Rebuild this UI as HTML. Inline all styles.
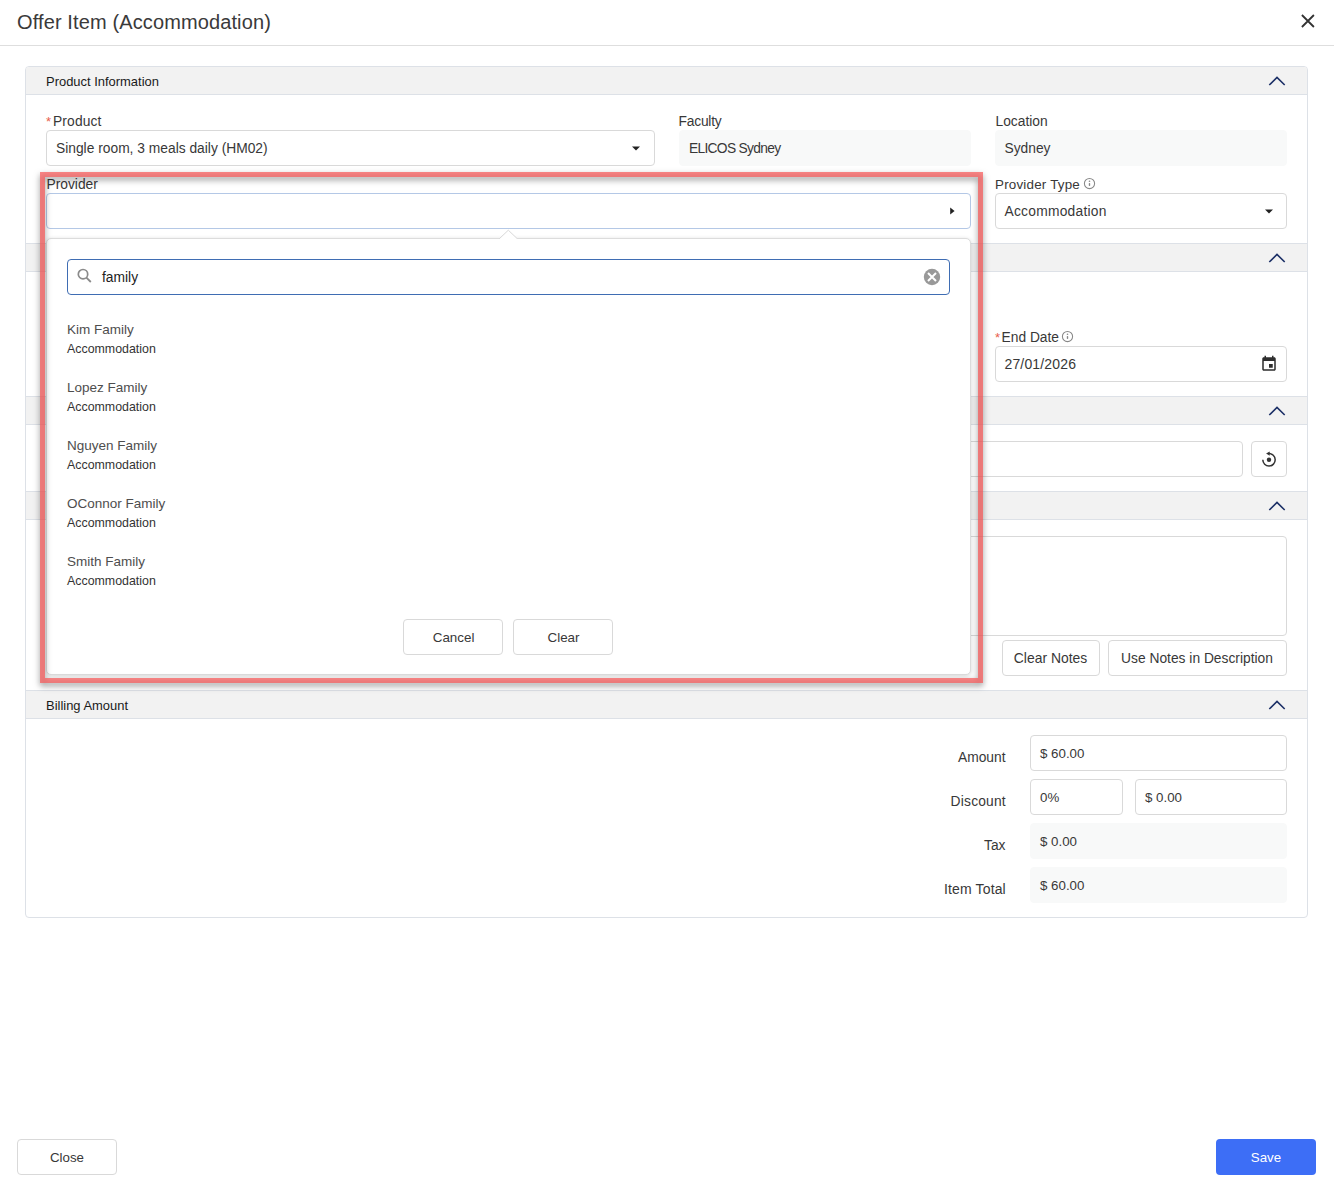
<!DOCTYPE html>
<html><head><meta charset="utf-8"><style>
html,body{margin:0;padding:0;background:#fff;width:1334px;height:1190px;overflow:hidden;position:relative;font-family:"Liberation Sans", sans-serif;}
.a{position:absolute;}
.t{position:absolute;white-space:nowrap;font-family:"Liberation Sans", sans-serif;}
</style></head><body>
<div class="t" style="left:17px;top:11px;font-size:20px;line-height:22px;color:#3a3a3a;letter-spacing:0.12px">Offer Item (Accommodation)</div>
<svg class="a" style="left:1300px;top:13px" width="16" height="16" viewBox="0 0 16 16"><path d="M1.9 2.0 L13.9 14.0 M13.9 2.0 L1.9 14.0" stroke="#333" stroke-width="1.8" fill="none"/></svg>
<div class="a" style="left:0px;top:45px;width:1334px;height:1px;background:#dedede"></div>
<div class="a" style="left:25px;top:66px;width:1283px;height:852px;border:1px solid #dde1e7;border-radius:4px;box-sizing:border-box;background:#fff"></div>
<div class="a" style="left:26px;top:67px;width:1281px;height:28px;background:#f2f2f2;border-bottom:1px solid #dde1e7;box-sizing:border-box;border-radius:3px 3px 0 0"></div>
<svg class="a" style="left:1268px;top:75px" width="18" height="12" viewBox="0 0 18 12"><path d="M1.3 10 L9 2.4 L16.7 10" stroke="#1b2f66" stroke-width="1.6" fill="none"/></svg>
<div class="t" style="left:46px;top:74px;font-size:12.95px;line-height:15px;color:#1a1a1a;">Product Information</div>
<div class="a" style="left:26px;top:243px;width:1281px;height:29px;background:#f2f2f2;border-top:1px solid #dde1e7;border-bottom:1px solid #dde1e7;box-sizing:border-box;"></div>
<svg class="a" style="left:1268px;top:251.5px" width="18" height="12" viewBox="0 0 18 12"><path d="M1.3 10 L9 2.4 L16.7 10" stroke="#1b2f66" stroke-width="1.6" fill="none"/></svg>
<div class="a" style="left:26px;top:396px;width:1281px;height:29px;background:#f2f2f2;border-top:1px solid #dde1e7;border-bottom:1px solid #dde1e7;box-sizing:border-box;"></div>
<svg class="a" style="left:1268px;top:404.5px" width="18" height="12" viewBox="0 0 18 12"><path d="M1.3 10 L9 2.4 L16.7 10" stroke="#1b2f66" stroke-width="1.6" fill="none"/></svg>
<div class="a" style="left:26px;top:491px;width:1281px;height:29px;background:#f2f2f2;border-top:1px solid #dde1e7;border-bottom:1px solid #dde1e7;box-sizing:border-box;"></div>
<svg class="a" style="left:1268px;top:499.5px" width="18" height="12" viewBox="0 0 18 12"><path d="M1.3 10 L9 2.4 L16.7 10" stroke="#1b2f66" stroke-width="1.6" fill="none"/></svg>
<div class="a" style="left:26px;top:690px;width:1281px;height:29px;background:#f2f2f2;border-top:1px solid #dde1e7;border-bottom:1px solid #dde1e7;box-sizing:border-box;"></div>
<svg class="a" style="left:1268px;top:698.5px" width="18" height="12" viewBox="0 0 18 12"><path d="M1.3 10 L9 2.4 L16.7 10" stroke="#1b2f66" stroke-width="1.6" fill="none"/></svg>
<div class="t" style="left:46px;top:698px;font-size:12.95px;line-height:15px;color:#1a1a1a;">Billing Amount</div>
<div class="t" style="left:46px;top:114px;font-size:13px;line-height:15px;color:#e8604c;">*</div>
<div class="t" style="left:53px;top:114px;font-size:13.8px;line-height:15px;color:#383838;letter-spacing:0.15px">Product</div>
<div class="a" style="left:46px;top:130px;width:609px;height:36px;border:1px solid #d9d9d9;border-radius:4px;box-sizing:border-box;background:#fff;"></div>
<div class="t" style="left:56px;top:141px;font-size:13.8px;line-height:15px;color:#383838;">Single room, 3 meals daily (HM02)</div>
<svg class="a" style="left:631.0px;top:145.6px" width="10" height="6" viewBox="0 0 10 6"><path d="M1 0.5 L9 0.5 L5 4.5 Z" fill="#222"/></svg>
<div class="t" style="left:678.5px;top:114px;font-size:13.8px;line-height:15px;color:#383838;letter-spacing:-0.2px">Faculty</div>
<div class="a" style="left:679px;top:130px;width:292px;height:36px;border:1px solid #f8f9f9;border-radius:4px;box-sizing:border-box;background:#f8f9f9;"></div>
<div class="t" style="left:689px;top:141px;font-size:13.8px;line-height:15px;color:#383838;letter-spacing:-0.7px">ELICOS Sydney</div>
<div class="t" style="left:995.5px;top:114px;font-size:13.8px;line-height:15px;color:#383838;">Location</div>
<div class="a" style="left:995px;top:130px;width:292px;height:36px;border:1px solid #f8f9f9;border-radius:4px;box-sizing:border-box;background:#f8f9f9;"></div>
<div class="t" style="left:1004.5px;top:141px;font-size:13.8px;line-height:15px;color:#383838;">Sydney</div>
<div class="t" style="left:995px;top:177px;font-size:13.4px;line-height:15px;color:#383838;letter-spacing:0.2px">Provider Type</div>
<svg class="a" style="left:1082.8px;top:177.0px" width="13" height="13" viewBox="0 0 13 13"><circle cx="6.5" cy="6.5" r="5.1" stroke="#888" stroke-width="1.05" fill="none"/><rect x="5.8" y="6.1" width="1.4" height="2.8" rx="0.6" fill="#888"/><circle cx="6.5" cy="4.2" r="0.8" fill="#888"/></svg>
<div class="a" style="left:995px;top:193px;width:292px;height:36px;border:1px solid #d9d9d9;border-radius:4px;box-sizing:border-box;background:#fff;"></div>
<div class="t" style="left:1004.5px;top:204px;font-size:13.8px;line-height:15px;color:#383838;letter-spacing:0.25px">Accommodation</div>
<svg class="a" style="left:1263.5px;top:208.6px" width="10" height="6" viewBox="0 0 10 6"><path d="M1 0.5 L9 0.5 L5 4.5 Z" fill="#222"/></svg>
<div class="t" style="left:995px;top:330px;font-size:13px;line-height:15px;color:#e8604c;">*</div>
<div class="t" style="left:1001.5px;top:330px;font-size:13.8px;line-height:15px;color:#383838;">End Date</div>
<svg class="a" style="left:1061.0px;top:329.7px" width="13" height="13" viewBox="0 0 13 13"><circle cx="6.5" cy="6.5" r="5.1" stroke="#888" stroke-width="1.05" fill="none"/><rect x="5.8" y="6.1" width="1.4" height="2.8" rx="0.6" fill="#888"/><circle cx="6.5" cy="4.2" r="0.8" fill="#888"/></svg>
<div class="a" style="left:995px;top:346px;width:292px;height:36px;border:1px solid #d9d9d9;border-radius:4px;box-sizing:border-box;background:#fff;"></div>
<div class="t" style="left:1004.5px;top:356px;font-size:14px;line-height:16px;color:#383838;letter-spacing:0.15px">27/01/2026</div>
<svg class="a" style="left:1260px;top:354.5px" width="18" height="18" viewBox="0 0 24 24"><path fill="#2e2e2e" d="M17 12h-5v5h5v-5zM16 1v2H8V1H6v2H5c-1.11 0-1.99.9-1.99 2L3 19c0 1.1.89 2 2 2h14c1.1 0 2-.9 2-2V5c0-1.1-.9-2-2-2h-1V1h-2zm3 18H5V8h14v11z"/></svg>
<div class="a" style="left:46px;top:441px;width:1197px;height:36px;border:1px solid #d9d9d9;border-radius:4px;box-sizing:border-box;background:#fff;"></div>
<div class="a" style="left:1251px;top:441px;width:36px;height:36px;border:1px solid #d9d9d9;border-radius:4px;box-sizing:border-box;background:#fff;"></div>
<svg class="a" style="left:1260px;top:450px" width="18" height="18" viewBox="0 0 18 18"><path d="M2.8 9.8 A6.2 6.2 0 1 0 8.8 3.6" stroke="#333" stroke-width="1.5" fill="none"/><path d="M6.1 3.6 L9.7 1.5 L9.7 5.7 Z" fill="#333"/><circle cx="9" cy="9.8" r="2.2" fill="#333"/></svg>
<div class="a" style="left:46px;top:536px;width:1241px;height:100px;border:1px solid #d9d9d9;border-radius:4px;box-sizing:border-box;background:#fff;"></div>
<div class="a" style="left:1002px;top:640px;width:98px;height:36px;border:1px solid #d9d9d9;border-radius:4px;box-sizing:border-box;background:#fff;"></div>
<div class="t" style="left:850.5px;width:400px;text-align:center;top:650px;font-size:13.9px;line-height:16px;color:#383838;">Clear Notes</div>
<div class="a" style="left:1108px;top:640px;width:179px;height:36px;border:1px solid #d9d9d9;border-radius:4px;box-sizing:border-box;background:#fff;"></div>
<div class="t" style="left:997px;width:400px;text-align:center;top:651px;font-size:13.8px;line-height:15px;color:#383838;">Use Notes in Description</div>
<div class="t" style="right:328.5px;text-align:right;top:750px;font-size:13.8px;line-height:15px;color:#383838;">Amount</div>
<div class="a" style="left:1030px;top:735px;width:257px;height:36px;border:1px solid #d9d9d9;border-radius:4px;box-sizing:border-box;background:#fff;"></div>
<div class="t" style="left:1040px;top:746px;font-size:13.3px;line-height:15px;color:#383838;">$ 60.00</div>
<div class="t" style="right:328.29999999999995px;text-align:right;top:794px;font-size:13.8px;line-height:15px;color:#383838;letter-spacing:0.2px;margin-right:-0.2px">Discount</div>
<div class="a" style="left:1030px;top:779px;width:93px;height:36px;border:1px solid #d9d9d9;border-radius:4px;box-sizing:border-box;background:#fff;"></div>
<div class="t" style="left:1040px;top:790px;font-size:13.3px;line-height:15px;color:#383838;">0%</div>
<div class="a" style="left:1135px;top:779px;width:152px;height:36px;border:1px solid #d9d9d9;border-radius:4px;box-sizing:border-box;background:#fff;"></div>
<div class="t" style="left:1145px;top:790px;font-size:13.3px;line-height:15px;color:#383838;">$ 0.00</div>
<div class="t" style="right:328.5px;text-align:right;top:838px;font-size:13.8px;line-height:15px;color:#383838;">Tax</div>
<div class="a" style="left:1030px;top:823px;width:257px;height:36px;border:1px solid #f8f9f9;border-radius:4px;box-sizing:border-box;background:#f8f9f9;"></div>
<div class="t" style="left:1040px;top:834px;font-size:13.3px;line-height:15px;color:#383838;">$ 0.00</div>
<div class="t" style="right:328.29999999999995px;text-align:right;top:881px;font-size:14px;line-height:16px;color:#383838;letter-spacing:0.13px;margin-right:-0.13px">Item Total</div>
<div class="a" style="left:1030px;top:867px;width:257px;height:36px;border:1px solid #f8f9f9;border-radius:4px;box-sizing:border-box;background:#f8f9f9;"></div>
<div class="t" style="left:1040px;top:878px;font-size:13.3px;line-height:15px;color:#383838;">$ 60.00</div>
<div class="a" style="left:17px;top:1139px;width:100px;height:36px;border:1px solid #d9d9d9;border-radius:4px;box-sizing:border-box;background:#fff;"></div>
<div class="t" style="left:-133px;width:400px;text-align:center;top:1150px;font-size:13.3px;line-height:15px;color:#383838;">Close</div>
<div class="a" style="left:1216px;top:1139px;width:100px;height:36px;background:#3d6ef6;border-radius:4px"></div>
<div class="t" style="left:1066px;width:400px;text-align:center;top:1150px;font-size:13.3px;line-height:15px;color:#fff;">Save</div>
<div class="t" style="left:46.5px;top:177px;font-size:13.8px;line-height:15px;color:#383838;">Provider</div>
<div class="a" style="left:46px;top:193px;width:925px;height:36px;border:1px solid #b4c8e6;border-radius:4px;box-sizing:border-box;background:#fff;"></div>
<svg class="a" style="left:949px;top:206px" width="8" height="10" viewBox="0 0 8 10"><path d="M1.2 1.4 L5.6 5 L1.2 8.6 Z" fill="#222"/></svg>
<div class="a" style="left:46px;top:238px;width:925px;height:437px;border:1px solid #dcdcdc;border-radius:5px;box-sizing:border-box;background:#fff;box-shadow:0 1px 4px rgba(0,0,0,0.16)"></div>
<svg class="a" style="left:498px;top:229px" width="21" height="11" viewBox="0 0 21 11"><path d="M1 10 L10.3 1.2 L19.6 10" stroke="#d8d8d8" stroke-width="1" fill="#fff"/><rect x="0" y="10" width="21" height="1" fill="#fff"/></svg>
<div class="a" style="left:67px;top:259px;width:883px;height:36px;border:1px solid #3f6db3;border-radius:4px;box-sizing:border-box;background:#fff;"></div>
<svg class="a" style="left:76px;top:267px" width="18" height="18" viewBox="0 0 18 18"><circle cx="7" cy="7.2" r="4.7" stroke="#8a8a8a" stroke-width="1.7" fill="none"/><path d="M10.4 10.6 L14.8 15" stroke="#8a8a8a" stroke-width="1.8"/></svg>
<div class="t" style="left:102px;top:270px;font-size:13.8px;line-height:15px;color:#222;">family</div>
<svg class="a" style="left:922.7px;top:268px" width="18" height="18" viewBox="0 0 18 18"><circle cx="9" cy="9" r="8.2" fill="#999"/><path d="M5.0 5.0 L13.0 13.0 M13.0 5.0 L5.0 13.0" stroke="#fff" stroke-width="2"/></svg>
<div class="t" style="left:67px;top:322px;font-size:13.5px;line-height:15px;color:#4e4e4e;">Kim Family</div>
<div class="t" style="left:67px;top:342px;font-size:12.4px;line-height:14px;color:#333;">Accommodation</div>
<div class="t" style="left:67px;top:380px;font-size:13.5px;line-height:15px;color:#4e4e4e;">Lopez Family</div>
<div class="t" style="left:67px;top:400px;font-size:12.4px;line-height:14px;color:#333;">Accommodation</div>
<div class="t" style="left:67px;top:438px;font-size:13.5px;line-height:15px;color:#4e4e4e;">Nguyen Family</div>
<div class="t" style="left:67px;top:458px;font-size:12.4px;line-height:14px;color:#333;">Accommodation</div>
<div class="t" style="left:67px;top:496px;font-size:13.5px;line-height:15px;color:#4e4e4e;">OConnor Family</div>
<div class="t" style="left:67px;top:516px;font-size:12.4px;line-height:14px;color:#333;">Accommodation</div>
<div class="t" style="left:67px;top:554px;font-size:13.5px;line-height:15px;color:#4e4e4e;">Smith Family</div>
<div class="t" style="left:67px;top:574px;font-size:12.4px;line-height:14px;color:#333;">Accommodation</div>
<div class="a" style="left:403px;top:619px;width:100px;height:36px;border:1px solid #d9d9d9;border-radius:4px;box-sizing:border-box;background:#fff;"></div>
<div class="t" style="left:253.60000000000002px;width:400px;text-align:center;top:630px;font-size:13.4px;line-height:15px;color:#383838;">Cancel</div>
<div class="a" style="left:513px;top:619px;width:100px;height:36px;border:1px solid #d9d9d9;border-radius:4px;box-sizing:border-box;background:#fff;"></div>
<div class="t" style="left:363.5px;width:400px;text-align:center;top:630px;font-size:13.4px;line-height:15px;color:#383838;">Clear</div>
<div class="a" style="left:40px;top:172px;width:943px;height:511px;border:5px solid rgba(250,86,86,0.7);box-sizing:border-box;filter:drop-shadow(0 3px 3px rgba(0,0,0,0.55))"></div>
</body></html>
